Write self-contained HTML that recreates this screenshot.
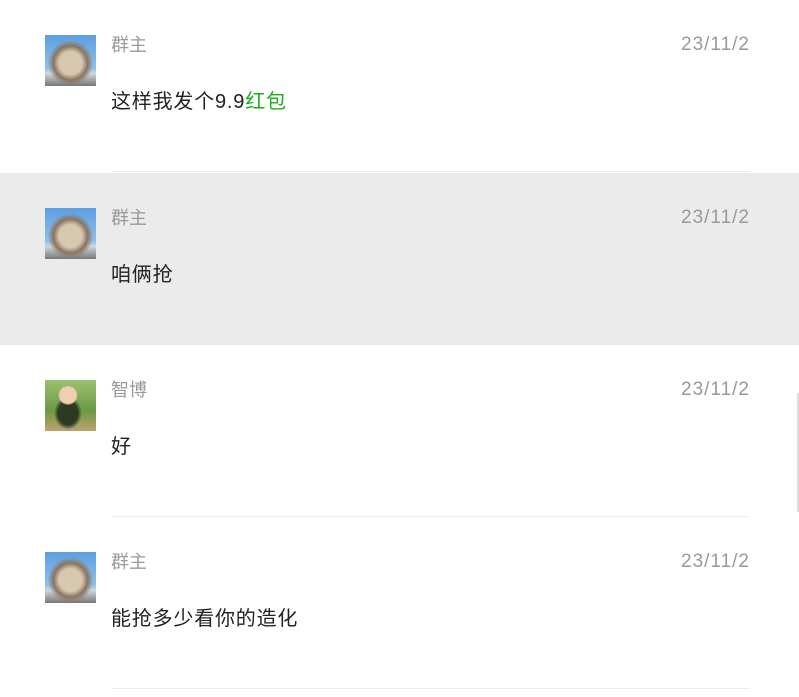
<!DOCTYPE html><html><head><meta charset="utf-8"><style>
body{margin:0;width:799px;height:697px;background:#fff;overflow:hidden;position:relative;font-family:"Liberation Sans","Noto Sans CJK SC",sans-serif}
.row{position:absolute;left:0;width:799px;height:172px}
.av{position:absolute;left:45px;top:35px;width:51px;height:51px;overflow:hidden}
.otter{background:radial-gradient(circle at 50% 55%,#d8c8b0 0 30%,#8a7460 45%,transparent 60%),linear-gradient(#5d9ee0 0,#8ec0ea 65%,#cfd8dc 75%,#777 100%)}
.baby{background:radial-gradient(circle at 45% 30%,#f0d0b0 0 18%,transparent 22%),radial-gradient(ellipse at 45% 65%,#2d3a22 0 25%,transparent 35%),linear-gradient(#9cc070,#6a9a44 60%,#c0a070)}
.name{position:absolute;left:111px;top:33px;font-size:18px;line-height:24px;color:#999}
.date{position:absolute;right:50px;top:33px;font-size:19px;line-height:24px;letter-spacing:1px;margin-right:-1px;color:#999}
.msg{position:absolute;left:111px;top:88px;font-size:20px;line-height:28px;color:#222;letter-spacing:0.8px}
.line{position:absolute;left:111px;width:639px;height:1px;background:#ececec;bottom:0}
</style></head><body>
<div class="row" style="top:0"><div class="av otter"></div><div class="name">群主</div><div class="date">23/11/2</div><div class="msg">这样我发个9.9<span style="color:#1aad19">红包</span></div><div class="line"></div></div>
<div class="row" style="top:173px;background:#ebebeb"><div class="av otter"></div><div class="name">群主</div><div class="date">23/11/2</div><div class="msg">咱俩抢</div></div>
<div class="row" style="top:345px"><div class="av baby"></div><div class="name">智博</div><div class="date">23/11/2</div><div class="msg">好</div><div class="line"></div></div>
<div class="row" style="top:517px"><div class="av otter"></div><div class="name">群主</div><div class="date">23/11/2</div><div class="msg">能抢多少看你的造化</div><div class="line"></div></div>
<div style="position:absolute;left:797px;top:393px;width:2px;height:119px;background:#ddd"></div>
</body></html>
